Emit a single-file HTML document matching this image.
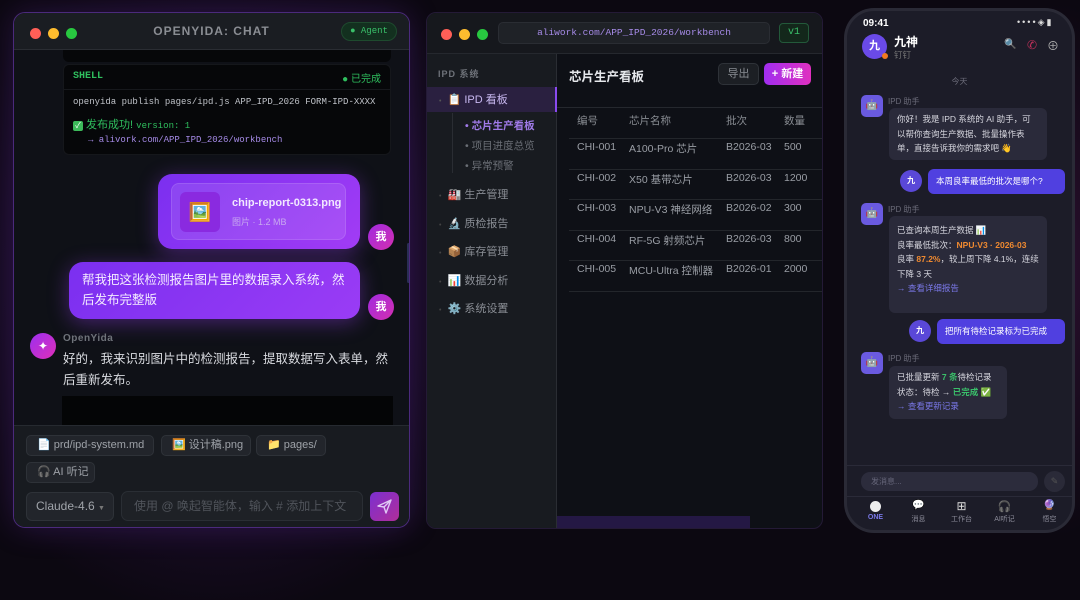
<!DOCTYPE html>
<html><head><meta charset="utf-8"><style>
*{box-sizing:border-box;margin:0;padding:0}
body{width:1080px;height:539px;overflow:hidden;background:#0c0811;font-family:"Liberation Sans","Noto Sans CJK SC",sans-serif;position:relative}
.glow{position:absolute;left:-60px;top:-40px;width:560px;height:640px;background:radial-gradient(ellipse at center,#2a1240 0%,#1a0c28 45%,rgba(12,8,17,0) 75%)}
.glow2{position:absolute;left:960px;top:0;width:200px;height:539px;background:radial-gradient(ellipse at center,#2a0f2e 0%,rgba(12,8,17,0) 70%)}
.abs{position:absolute}
.mono{font-family:"Liberation Mono","Noto Sans CJK SC",monospace}
.dots span{display:inline-block;width:11px;height:11px;border-radius:50%;margin-right:7px}
.r{background:#ff5f57}.y{background:#febc2e}.g{background:#28c840}
</style></head><body>
<div class="glow"></div><div class="glow2"></div>

<!-- LEFT WINDOW -->
<div class="abs" style="left:13px;top:12px;width:397px;height:516px;border-radius:12px;border:1px solid #4b2a7c;background:#0f1117;overflow:hidden;box-shadow:0 0 30px rgba(120,50,200,.25)">
 <div class="abs" style="left:0;top:0;width:100%;height:37px;background:#1a1d22;border-bottom:1px solid #2a2d33">
  <div class="dots abs" style="left:16px;top:13px"><span class="r"></span><span class="y"></span><span class="g"></span></div>
  <div class="abs" style="left:0;width:100%;top:11px;text-align:center;color:#8a8d93;font-weight:bold;font-size:12px;letter-spacing:1px">OPENYIDA: CHAT</div>
  <div class="abs mono" style="left:327px;top:9px;width:56px;height:19px;border-radius:10px;background:#13301f;border:1px solid #1e4a2e;color:#3ac06a;font-size:9px;line-height:17px;text-align:center">● Agent</div>
 </div>
 <div class="abs" style="left:49px;top:37px;width:328px;height:12px;background:#060709;border-radius:0 0 6px 6px"></div>
 <div class="abs" style="left:49px;top:51px;width:328px;height:91px;background:#060709;border-radius:6px;border:1px solid #15171b">
  <div class="abs mono" style="left:9px;top:6px;color:#2fbf5e;font-weight:bold;font-size:10px">SHELL</div>
  <div class="abs" style="right:9px;top:5px;color:#2fbf5e;font-size:10px">● 已完成</div>
  <div class="abs" style="left:0;top:24px;width:100%;border-top:1px solid #16181c"></div>
  <div class="abs mono" style="left:9px;top:32px;color:#bfc2c8;font-size:9px">openyida publish pages/ipd.js APP_IPD_2026 FORM-IPD-XXXX</div>
  <div class="abs" style="left:9px;top:51px;color:#2fbf5e;font-size:11px"><span style="display:inline-block;width:10px;height:10px;background:#3cba5a;border-radius:2px;color:#fff;font-size:8px;line-height:10px;text-align:center">✓</span> 发布成功! <span class="mono" style="font-size:9px">version: 1</span></div>
  <div class="abs mono" style="left:24px;top:70px;color:#a58ae6;font-size:9px">→ alivork.com/APP_IPD_2026/workbench</div>
 </div>
 <div class="abs" style="left:144px;top:161px;width:202px;height:75px;border-radius:14px;background:linear-gradient(135deg,#7b2ff0,#a23cf5);box-shadow:0 4px 20px rgba(150,60,240,.4)">
  <div class="abs" style="left:13px;top:9px;width:175px;height:57px;border-radius:8px;background:rgba(255,255,255,.1);border:1px solid rgba(255,255,255,.12)">
   <div class="abs" style="left:8px;top:8px;width:40px;height:40px;border-radius:6px;background:#8a2ae0;text-align:center;line-height:40px;font-size:18px">🖼️</div>
   <div class="abs" style="left:60px;top:13px;color:#f2e9ff;font-weight:bold;font-size:11px">chip-report-0313.png</div>
   <div class="abs" style="left:60px;top:31px;color:#c8a8f0;font-size:9px">图片 · 1.2 MB</div>
  </div>
 </div>
 <div class="abs" style="left:354px;top:211px;width:26px;height:26px;border-radius:50%;background:linear-gradient(135deg,#a02ae0,#d42fb0);color:#fff;font-weight:bold;font-size:11px;text-align:center;line-height:26px">我</div>
 <div class="abs" style="left:55px;top:249px;width:291px;height:57px;border-radius:14px;background:linear-gradient(135deg,#7b2ff0,#9a3cf5);box-shadow:0 4px 20px rgba(150,60,240,.4);color:#f4ecff;font-size:12.5px;line-height:20px;padding:8px 13px">帮我把这张检测报告图片里的数据录入系统，然后发布完整版</div>
 <div class="abs" style="left:354px;top:281px;width:26px;height:26px;border-radius:50%;background:linear-gradient(135deg,#a02ae0,#d42fb0);color:#fff;font-weight:bold;font-size:11px;text-align:center;line-height:26px">我</div>
 <div class="abs" style="left:16px;top:320px;width:26px;height:26px;border-radius:50%;background:linear-gradient(135deg,#9b2ff0,#e02fb8);color:#fff;font-size:12px;text-align:center;line-height:26px">✦</div>
 <div class="abs" style="left:49px;top:320px;color:#6f737a;font-weight:bold;font-size:10px;letter-spacing:.5px">OpenYida</div>
 <div class="abs" style="left:49px;top:336px;width:330px;color:#d9dbe0;font-size:12.5px;line-height:21px">好的，我来识别图片中的检测报告，提取数据写入表单，然后重新发布。</div>
 <div class="abs" style="left:48px;top:383px;width:331px;height:30px;background:#040506"></div>
 <div class="abs" style="left:0;top:412px;width:100%;height:104px;background:#181b20;border-top:1px solid #262a30">
  <div class="abs" style="left:12px;top:9px;width:128px;height:21px;border-radius:5px;background:#22252b;border:1px solid #2e3238;color:#9ea2a8;font-size:11px;line-height:19px;padding-left:10px">📄 prd/ipd-system.md</div>
  <div class="abs" style="left:147px;top:9px;width:90px;height:21px;border-radius:5px;background:#22252b;border:1px solid #2e3238;color:#9ea2a8;font-size:11px;line-height:19px;padding-left:10px">🖼️ 设计稿.png</div>
  <div class="abs" style="left:242px;top:9px;width:70px;height:21px;border-radius:5px;background:#22252b;border:1px solid #2e3238;color:#9ea2a8;font-size:11px;line-height:19px;padding-left:10px">📁 pages/</div>
  <div class="abs" style="left:12px;top:36px;width:69px;height:21px;border-radius:5px;background:#22252b;border:1px solid #2e3238;color:#9ea2a8;font-size:11px;line-height:19px;padding-left:10px">🎧 AI 听记</div>
  <div class="abs" style="left:12px;top:66px;width:88px;height:29px;border-radius:6px;background:#22252b;border:1px solid #2e3238;color:#a0a4aa;font-size:12px;line-height:27px;padding-left:9px">Claude-4.6 <span style="font-size:7px;color:#777">▼</span></div>
  <div class="abs" style="left:107px;top:65px;width:242px;height:30px;border-radius:7px;background:#1e2126;border:1px solid #2a2e34;color:#50545b;font-size:12px;line-height:28px;padding-left:12px">使用 @ 唤起智能体，输入 # 添加上下文</div>
  <div class="abs" style="left:356px;top:66px;width:29px;height:29px;border-radius:6px;background:linear-gradient(135deg,#7b2fd0,#b02e9a)">
   <svg width="29" height="29" viewBox="0 0 29 29"><path d="M8 14 L21 8 L16 21 L14 15 Z M14 15 L21 8" fill="none" stroke="#e0c8f5" stroke-width="1.4" stroke-linejoin="round"/></svg>
  </div>
 </div>
 <div class="abs" style="left:393px;top:230px;width:3px;height:40px;background:#2a2d55;border-radius:2px"></div>
</div>

<!-- MIDDLE WINDOW -->
<div class="abs" style="left:426px;top:12px;width:397px;height:517px;border-radius:10px;border:1px solid #241a36;background:#0e1016;overflow:hidden">
 <div class="abs" style="left:0;top:0;width:100%;height:41px;background:#16181d;border-bottom:1px solid #25282e">
  <div class="dots abs" style="left:14px;top:14px"><span class="r"></span><span class="y"></span><span class="g"></span></div>
  <div class="abs mono" style="left:71px;top:9px;width:272px;height:22px;border-radius:5px;background:#1f2227;border:1px solid #2a2d33;color:#a58ae6;font-size:9.5px;line-height:20px;text-align:center">aliwork.com/APP_IPD_2026/workbench</div>
  <div class="abs mono" style="left:352px;top:10px;width:30px;height:20px;border-radius:4px;background:#13271b;border:1px solid #23593a;color:#3ac06a;font-size:10px;line-height:18px;text-align:center">v1</div>
 </div>
 <div class="abs" style="left:0;top:41px;width:130px;height:476px;background:#181b20;border-right:1px solid #2a2d33">
  <div class="abs" style="left:11px;top:13px;color:#6f737a;font-size:9px;font-weight:bold;letter-spacing:1px">IPD 系统</div>
  <div class="abs" style="left:0;top:33px;width:130px;height:25px;background:#2a2040;border-right:2px solid #8a4af0"></div>
  <div class="abs" style="left:12px;top:37px;color:#c8b8f0;font-size:11px;width:120px"><span style="color:#555;font-size:7px">•</span> &nbsp;📋 IPD 看板</div>
  <div class="abs" style="left:25px;top:59px;width:1px;height:60px;background:#2a2d33"></div>
  <div class="abs" style="left:38px;top:64px;color:#a07ae8;font-size:10.5px;font-weight:bold">• 芯片生产看板</div>
  <div class="abs" style="left:38px;top:84px;color:#6a6e75;font-size:10.5px">• 项目进度总览</div>
  <div class="abs" style="left:38px;top:104px;color:#6a6e75;font-size:10.5px">• 异常预警</div>
  <div class="abs" style="left:12px;top:128px;color:#8a8e95;font-size:11px;line-height:27.5px;width:120px">
   <div><span style="color:#444;font-size:7px">•</span> &nbsp;🏭 生产管理</div>
   <div><span style="color:#444;font-size:7px">•</span> &nbsp;🔬 质检报告</div>
   <div><span style="color:#444;font-size:7px">•</span> &nbsp;📦 库存管理</div>
   <div><span style="color:#444;font-size:7px">•</span> &nbsp;📊 数据分析</div>
   <div><span style="color:#444;font-size:7px">•</span> &nbsp;⚙️ 系统设置</div>
  </div>
 </div>
 <div class="abs" style="left:130px;top:41px;width:267px;height:54px;border-bottom:1px solid #25282e">
  <div class="abs" style="left:12px;top:12px;color:#e6e8ec;font-weight:bold;font-size:12.5px">芯片生产看板</div>
  <div class="abs" style="left:161px;top:9px;width:41px;height:22px;border-radius:5px;background:#1c1f24;border:1px solid #2e3238;color:#888c92;font-size:11px;line-height:20px;text-align:center">导出</div>
  <div class="abs" style="left:207px;top:9px;width:47px;height:22px;border-radius:5px;background:linear-gradient(90deg,#a02ef0,#e030c0);color:#fff;font-size:11px;line-height:22px;text-align:center;font-weight:bold">+ 新建</div>
 </div>
 <div class="abs" style="left:142px;top:95px;width:260px;color:#9a9ea5;font-size:10.5px">
  <div style="height:31px;border-bottom:1px solid #23262b;position:relative;color:#888c92"><span class="abs" style="left:8px;top:5px">编号</span><span class="abs" style="left:60px;top:5px">芯片名称</span><span class="abs" style="left:157px;top:5px">批次</span><span class="abs" style="left:215px;top:5px">数量</span></div>
  <div style="height:30.5px;border-bottom:1px solid #23262b;position:relative"><span class="abs" style="left:8px;top:2px">CHI-001</span><span class="abs" style="left:60px;top:2px">A100-Pro 芯片</span><span class="abs" style="left:157px;top:2px">B2026-03</span><span class="abs" style="left:215px;top:2px">500</span></div>
  <div style="height:30.5px;border-bottom:1px solid #23262b;position:relative"><span class="abs" style="left:8px;top:2px">CHI-002</span><span class="abs" style="left:60px;top:2px">X50 基带芯片</span><span class="abs" style="left:157px;top:2px">B2026-03</span><span class="abs" style="left:215px;top:2px">1200</span></div>
  <div style="height:30.5px;border-bottom:1px solid #23262b;position:relative"><span class="abs" style="left:8px;top:2px">CHI-003</span><span class="abs" style="left:60px;top:2px">NPU-V3 神经网络</span><span class="abs" style="left:157px;top:2px">B2026-02</span><span class="abs" style="left:215px;top:2px">300</span></div>
  <div style="height:30.5px;border-bottom:1px solid #23262b;position:relative"><span class="abs" style="left:8px;top:2px">CHI-004</span><span class="abs" style="left:60px;top:2px">RF-5G 射频芯片</span><span class="abs" style="left:157px;top:2px">B2026-03</span><span class="abs" style="left:215px;top:2px">800</span></div>
  <div style="height:30.5px;border-bottom:1px solid #23262b;position:relative"><span class="abs" style="left:8px;top:2px">CHI-005</span><span class="abs" style="left:60px;top:2px">MCU-Ultra 控制器</span><span class="abs" style="left:157px;top:2px">B2026-01</span><span class="abs" style="left:215px;top:2px">2000</span></div>
 </div>
 <div class="abs" style="left:130px;top:503px;width:193px;height:14px;background:#241844"></div>
</div>

<!-- PHONE -->
<div class="abs" style="left:844px;top:8px;width:231px;height:525px;border-radius:30px;background:#2a2a36;padding:3px">
<div style="position:relative;width:225px;height:519px;border-radius:27px;background:#1c1c28;overflow:hidden">
 <div class="abs" style="left:16px;top:7px;color:#fff;font-weight:bold;font-size:10px">09:41</div>
 <div class="abs" style="left:170px;top:6px;color:#ddd;font-size:9px;letter-spacing:2px">••••◈▮</div>
 <div class="abs" style="left:15px;top:23px;width:25px;height:25px;border-radius:50%;background:#6a4ae8;color:#fff;font-weight:bold;font-size:11px;text-align:center;line-height:25px">九</div>
 <div class="abs" style="left:35px;top:42px;width:6px;height:6px;border-radius:50%;background:#f07a20"></div>
 <div class="abs" style="left:47px;top:22px;color:#fff;font-weight:bold;font-size:12px">九神</div>
 <div class="abs" style="left:47px;top:38px;color:#777;font-size:8.5px">钉钉</div>
 <div class="abs" style="left:157px;top:28px;color:#2aa0c0;font-size:10px">🔍</div>
 <div class="abs" style="left:180px;top:27px;color:#c0305a;font-size:12px">✆</div>
 <div class="abs" style="left:200px;top:26px;color:#aaa;font-size:12px">⊕</div>
 <div class="abs" style="left:0;width:225px;top:65px;text-align:center;color:#6a6a78;font-size:8px">今天</div>
 <div class="abs" style="left:14px;top:84px;width:22px;height:22px;border-radius:5px;background:#6a5ae0;text-align:center;line-height:22px;font-size:10px">🤖</div>
 <div class="abs" style="left:41px;top:85px;color:#6a6a78;font-size:8px">IPD 助手</div>
 <div class="abs" style="left:42px;top:97px;width:158px;height:52px;border-radius:6px;background:#2a2a3a;color:#d6d6de;font-size:8.5px;line-height:14.5px;padding:4px 8px">你好！我是 IPD 系统的 AI 助手，可以帮你查询生产数据、批量操作表单，直接告诉我你的需求吧 👋</div>
 <div class="abs" style="left:53px;top:159px;width:22px;height:22px;border-radius:50%;background:#5a48d8;color:#fff;font-size:8px;font-weight:bold;text-align:center;line-height:22px">九</div>
 <div class="abs" style="left:81px;top:158px;width:137px;height:25px;border-radius:6px;background:#5040e0;color:#fff;font-size:8.5px;line-height:25px;padding-left:8px">本周良率最低的批次是哪个?</div>
 <div class="abs" style="left:14px;top:192px;width:22px;height:22px;border-radius:5px;background:#6a5ae0;text-align:center;line-height:22px;font-size:10px">🤖</div>
 <div class="abs" style="left:41px;top:193px;color:#6a6a78;font-size:8px">IPD 助手</div>
 <div class="abs" style="left:42px;top:205px;width:158px;height:97px;border-radius:6px;background:#2a2a3a;color:#d6d6de;font-size:8.5px;line-height:14.5px;padding:7px 8px">已查询本周生产数据 📊<br>良率最低批次：<b style="color:#f08a30">NPU-V3 · 2026-03</b><br>良率 <b style="color:#f08a30">87.2%</b>，较上周下降 4.1%，连续下降 3 天<br><span style="color:#7a78e8">→ 查看详细报告</span></div>
 <div class="abs" style="left:62px;top:309px;width:22px;height:22px;border-radius:50%;background:#5a48d8;color:#fff;font-size:8px;font-weight:bold;text-align:center;line-height:22px">九</div>
 <div class="abs" style="left:90px;top:308px;width:128px;height:25px;border-radius:6px;background:#5040e0;color:#fff;font-size:8.5px;line-height:25px;padding-left:8px">把所有待检记录标为已完成</div>
 <div class="abs" style="left:14px;top:341px;width:22px;height:22px;border-radius:5px;background:#6a5ae0;text-align:center;line-height:22px;font-size:10px">🤖</div>
 <div class="abs" style="left:41px;top:342px;color:#6a6a78;font-size:8px">IPD 助手</div>
 <div class="abs" style="left:42px;top:355px;width:118px;height:53px;border-radius:6px;background:#2a2a3a;color:#d6d6de;font-size:8.5px;line-height:14.5px;padding:4px 8px">已批量更新 <b style="color:#3ac06a">7 条</b>待检记录<br>状态：待检 → <b style="color:#3ac06a">已完成</b> ✅<br><span style="color:#7a78e8">→ 查看更新记录</span></div>
 <div class="abs" style="left:0;top:454px;width:225px;border-top:1px solid #2a2a38"></div>
 <div class="abs" style="left:14px;top:461px;width:177px;height:19px;border-radius:9px;background:#2c2c3c;color:#66667a;font-size:8px;line-height:19px;padding-left:10px">发消息...</div>
 <div class="abs" style="left:197px;top:460px;width:21px;height:21px;border-radius:50%;background:#2a2a38;color:#555;font-size:9px;text-align:center;line-height:21px">✎</div>
 <div class="abs" style="left:0;top:485px;width:225px;border-top:1px solid #2a2a38"></div>
 <div class="abs" style="left:0;top:489px;width:225px;font-size:7px;color:#8a8a98">
  <div class="abs" style="left:16px;width:25px;text-align:center;color:#7a78e8;font-weight:bold"><div style="width:11px;height:11px;border-radius:50%;background:#eee;margin:1px auto 2px"></div>ONE</div>
  <div class="abs" style="left:59px;width:25px;text-align:center"><div style="font-size:10px;height:14px">💬</div>消息</div>
  <div class="abs" style="left:102px;width:25px;text-align:center"><div style="font-size:12px;height:14px;line-height:12px;color:#ddd">⊞</div>工作台</div>
  <div class="abs" style="left:145px;width:25px;text-align:center"><div style="font-size:11px;height:14px;color:#ddd">🎧</div>AI听记</div>
  <div class="abs" style="left:190px;width:25px;text-align:center"><div style="font-size:10px;height:14px">🔮</div>悟空</div>
 </div>
</div></div>
</body></html>
